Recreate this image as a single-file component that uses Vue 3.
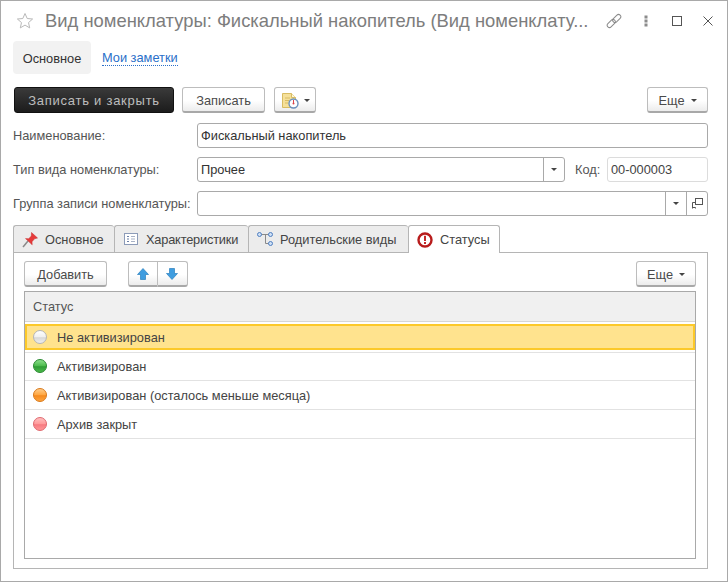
<template>
  <div class="window">
    <header class="title-bar">
      <svg class="star" width="18" height="18" viewBox="0 0 18 18">
        <path d="M9 1.500l2.200 5 5.400.5-4.100 3.600 1.200 5.300L9 13.100l-4.700 2.800 1.200-5.300L1.400 7l5.400-.5z" fill="#fff" stroke="#b9b9b9" />
      </svg>
      <div class="title">Вид номенклатуры: Фискальный накопитель (Вид номенклату...</div>
      <div class="window-tools">
        <svg width="16" height="16" viewBox="0 0 16 16" fill="none" stroke="#8a8a8a">
          <rect x="0.500" y="8.250" width="9.500" height="4.500" rx="2.250" transform="rotate(-45 5.250 10.500)" />
          <rect x="6" y="3.250" width="9.500" height="4.500" rx="2.250" transform="rotate(-45 10.750 5.500)" />
        </svg>
        <svg class="kebab" width="4" height="12" viewBox="0 0 4 12" fill="#8c8c8c">
          <rect x="0.500" y="0.500" width="3" height="3" />
          <rect x="0.500" y="4.500" width="3" height="3" />
          <rect x="0.500" y="8.500" width="3" height="3" />
        </svg>
        <span class="maximize"></span>
        <svg class="close" width="10" height="10" viewBox="0 0 10 10" stroke="#555" fill="none">
          <path d="M.5.500l9 9M9.500.500l-9 9" />
        </svg>
      </div>
    </header>

    <nav class="page-nav">
      <span class="page-tab">Основное</span>
      <a class="page-link">Мои заметки</a>
    </nav>

    <div class="command-bar">
      <button class="btn btn-default">Записать и закрыть</button>
      <button class="btn btn-save">Записать</button>
      <button class="btn btn-report">
        <svg width="17" height="17" viewBox="0 0 17 17">
          <path d="M.5 1.500h9l4 4v10H.5z" fill="#f5e09a" stroke="#d8bc62" />
          <path d="M9.500 1.500v4h4" fill="#fff6d6" stroke="#d8bc62" />
          <path d="M3 6h5M3 8.500h4M3 11h3" stroke="#d8bc62" />
          <circle cx="11.500" cy="11.500" r="4.500" fill="#fff" stroke="#6a8fbc" stroke-width="1.400" />
          <path d="M11.500 8v3.500" stroke="#d9424a" />
          <circle cx="11.500" cy="11.500" r="1" fill="#d9424a" />
        </svg>
        <i class="caret"></i>
      </button>
      <button class="btn btn-more">Еще<i class="caret"></i></button>
    </div>

    <div class="form">
      <div class="form-row">
        <label class="field-label">Наименование:</label>
        <div class="input">Фискальный накопитель</div>
      </div>
      <div class="form-row">
        <label class="field-label">Тип вида номенклатуры:</label>
        <div class="input input-type">
          <span class="input-text">Прочее</span>
          <span class="input-btn"><i class="caret"></i></span>
        </div>
        <label class="code-label">Код:</label>
        <div class="input input-code">00-000003</div>
      </div>
      <div class="form-row">
        <label class="field-label">Группа записи номенклатуры:</label>
        <div class="input input-group">
          <span class="input-text"></span>
          <span class="input-btn"><i class="caret"></i></span>
          <span class="input-btn">
            <svg width="11" height="11" viewBox="0 0 11 11" fill="none" stroke="#555">
              <rect x="3.500" y="0.500" width="7" height="6" />
              <path d="M3.500 4.500h-3v6M.5 9.500h3v1" />
            </svg>
          </span>
        </div>
      </div>
    </div>

    <div class="tabs">
      <div class="tab">
        <svg width="16" height="18" viewBox="0 0 16 18">
          <path d="M1 17l5-6" stroke="#8a8a8a" stroke-width="1.500" />
          <path d="M9.500 2.500l6 5.500-3 .8-2.500 3 .2 3-6.700-6.200 3.200.2 2.600-2.800z" fill="#e63a3a" stroke="#c42a2a" stroke-width="0.500" />
        </svg>
        Основное
      </div>
      <div class="tab tab-form">
        <svg width="14" height="14" viewBox="0 0 14 14" fill="none">
          <rect x="0.500" y="1.500" width="13" height="11" fill="#fff" stroke="#8c9bb8" />
          <path d="M3 4.500h2M3 7h2M3 9.500h2" stroke="#6b7fa6" />
          <path d="M7 4.500h4M7 7h4M7 9.500h4" stroke="#a8b2c6" />
        </svg>
        Характеристики
      </div>
      <div class="tab">
        <svg width="16" height="14" viewBox="0 0 16 14" fill="none">
          <path d="M4 2.500h8M8.500 2.500v9h3.500" stroke="#8a8a8a" />
          <circle cx="2.500" cy="2.500" r="2" fill="#cfe0f5" stroke="#4f7fc0" />
          <circle cx="13.500" cy="2.500" r="2" fill="#cfe0f5" stroke="#4f7fc0" />
          <circle cx="13.500" cy="11.500" r="2" fill="#cfe0f5" stroke="#4f7fc0" />
        </svg>
        Родительские виды
      </div>
      <div class="tab tab-active">
        <svg width="16" height="16" viewBox="0 0 16 16">
          <circle cx="8" cy="8" r="6.500" fill="#fff" stroke="#b81c1c" stroke-width="2.400" />
          <rect x="7" y="3.800" width="2" height="5.200" fill="#c42a2a" />
          <rect x="7" y="10" width="2" height="2" fill="#c42a2a" />
        </svg>
        Статусы
      </div>
      <div class="tabs-rest"></div>
    </div>

    <section class="panel">
      <div class="panel-bar">
        <button class="btn btn-add">Добавить</button>
        <div class="btn-pair">
          <button class="btn btn-arrow">
            <svg width="14" height="14" viewBox="0 0 14 14">
              <path d="M7 1.500l5.500 6H9.500v5h-5v-5H1.500z" fill="#3f9de0" stroke="#2a7fbd" stroke-width="0.700" />
            </svg>
          </button>
          <button class="btn btn-arrow">
            <svg width="14" height="14" viewBox="0 0 14 14">
              <path d="M7 12.500l5.500-6H9.500v-5h-5v5H1.500z" fill="#3f9de0" stroke="#2a7fbd" stroke-width="0.700" />
            </svg>
          </button>
        </div>
        <button class="btn btn-more">Еще<i class="caret"></i></button>
      </div>

      <div class="grid">
        <div class="grid-head">Статус</div>
        <div
          v-for="(row, i) in rows"
          :key="row.text"
          :class="['grid-row', { selected: i === 0 }]"
        >
          <svg width="16" height="16" viewBox="0 0 16 16">
            <defs>
              <linearGradient :id="'ball' + i" x1="0" y1="0" x2="0" y2="1">
                <stop offset="0" :stop-color="row.light" />
                <stop offset="0.500" :stop-color="row.mid" />
                <stop offset="0.550" :stop-color="row.deep" />
                <stop offset="1" :stop-color="row.mid" />
              </linearGradient>
            </defs>
            <circle cx="8" cy="8" r="6.500" :fill="'url(#ball' + i + ')'" :stroke="row.edge" />
          </svg>
          <span>{{ row.text }}</span>
        </div>
      </div>
    </section>
  </div>
</template>

<script setup>
const rows = [
  { text: 'Не активизирован', light: '#ffffff', mid: '#f0f0f0', deep: '#d8d8d8', edge: '#b5b5b5' },
  { text: 'Активизирован', light: '#8fe08f', mid: '#4cbb4c', deep: '#2f9c35', edge: '#2c8a33' },
  { text: 'Активизирован (осталось меньше месяца)', light: '#ffcf8f', mid: '#ffa640', deep: '#f58a1e', edge: '#d97a1c' },
  { text: 'Архив закрыт', light: '#ffc2c2', mid: '#ff9a9a', deep: '#f77a80', edge: '#e06a70' }
]
</script>

<style>
html, body {
  margin: 0;
  background: #fff;
}
</style>

<style scoped>
.window {
  width: 728px;
  height: 582px;
  box-sizing: border-box;
  border: 1px solid #a9a9a9;
  padding: 0 19px 12px 12px;
  display: flex;
  flex-direction: column;
  background: #fff;
  color: #4a4a4a;
  font-family: "Liberation Sans", Arial, sans-serif;
  font-size: 12.8px;
  overflow: hidden;
}

.title-bar {
  height: 40px;
  flex: none;
  display: flex;
  align-items: center;
  padding-left: 3px;
}

.star {
  flex: none;
}

.title {
  margin-left: 11px;
  width: 545px;
  flex: none;
  font-size: 18.4px;
  color: #7d7d7d;
  white-space: nowrap;
}

.window-tools {
  margin-left: 16px;
  display: flex;
  align-items: center;
  flex: none;
}

.kebab {
  margin-left: 22px;
}

.maximize {
  width: 8px;
  height: 8px;
  border: 1px solid #555;
  margin-left: 24px;
}

.close {
  margin-left: 21px;
}

.page-nav {
  height: 33px;
  flex: none;
  display: flex;
  align-items: center;
}

.page-tab {
  height: 33px;
  width: 78px;
  box-sizing: border-box;
  padding-top: 1px;
  background: #f2f2f2;
  border-radius: 4px;
  display: flex;
  align-items: center;
  justify-content: center;
  color: #333;
}

.page-link {
  margin-left: 11px;
  margin-top: 2px;
  color: #2a6fc9;
  border-bottom: 1px dotted #2a6fc9;
  line-height: 14px;
}

.command-bar {
  height: 26px;
  flex: none;
  margin-top: 13px;
  display: flex;
  align-items: stretch;
  padding-left: 1px;
}

.btn {
  height: 26px;
  box-sizing: border-box;
  padding: 1px 0 0;
  border: 1px solid #bdbdbd;
  border-bottom: 2px solid #a8a8a8;
  border-radius: 3px;
  background: linear-gradient(#ffffff, #ffffff 55%, #ececec);
  font: 12.8px "Liberation Sans", Arial, sans-serif;
  color: #4a4a4a;
  display: flex;
  align-items: center;
  justify-content: center;
}

.btn-default {
  width: 160px;
  border: 1px solid #111;
  background: linear-gradient(#3a3a3a, #1c1c1c);
  color: #bdbdbd;
  font-size: 13px;
  letter-spacing: 0.75px;
}

.btn-save {
  width: 83px;
  margin-left: 8px;
}

.btn-report {
  width: 42px;
  margin-left: 9px;
  justify-content: flex-start;
  padding-left: 7px;
  gap: 5px;
}

.btn-more {
  width: 61px;
  margin-left: auto;
  gap: 6px;
}

.caret {
  width: 0;
  height: 0;
  border-left: 3px solid transparent;
  border-right: 3px solid transparent;
  border-top: 3px solid #444;
  display: block;
}

.form {
  flex: none;
  margin-top: 10px;
  display: flex;
  flex-direction: column;
  gap: 9px;
}

.form-row {
  height: 25px;
  display: flex;
  align-items: center;
}

.field-label {
  width: 184px;
  flex: none;
  color: #555;
  white-space: nowrap;
}

.input {
  height: 25px;
  box-sizing: border-box;
  flex: 1;
  border: 1px solid #a9a9a9;
  border-radius: 3px;
  display: flex;
  align-items: center;
  padding-left: 3px;
  color: #333;
}

.input-type {
  flex: none;
  width: 368px;
}

.input-group {
  flex: 1;
}

.input-text {
  flex: 1;
}

.input-btn {
  width: 20px;
  height: 100%;
  border-left: 1px solid #a9a9a9;
  display: flex;
  align-items: center;
  justify-content: center;
}

.code-label {
  margin-left: 10px;
  width: 32px;
  flex: none;
  color: #555;
}

.input-code {
  flex: 1;
  border-color: #dcdcdc;
  color: #444;
}

.tabs {
  flex: none;
  margin-top: 9px;
  height: 28px;
  display: flex;
}

.tab {
  height: 28px;
  box-sizing: border-box;
  border: 1px solid #b5b5b5;
  border-right: none;
  border-radius: 3px 3px 0 0;
  background: #ececec;
  display: flex;
  align-items: center;
  gap: 7px;
  padding-left: 8px;
  color: #444;
}

.tab:nth-child(1) {
  width: 101px;
}

.tab:nth-child(2) {
  width: 134px;
}

.tab:nth-child(3) {
  width: 160px;
}

.tab-form {
  padding-left: 9px;
  gap: 8px;
  letter-spacing: -0.2px;
}

.tab-active {
  width: 92px;
  background: #fff;
  border-right: 1px solid #b5b5b5;
  border-bottom: none;
}

.tabs-rest {
  flex: 1;
  border-bottom: 1px solid #b5b5b5;
}

.panel {
  flex: 1;
  min-height: 0;
  box-sizing: border-box;
  border: 1px solid #b5b5b5;
  border-top: none;
  padding: 8px 11px 9px 10px;
  display: flex;
  flex-direction: column;
}

.panel-bar {
  height: 26px;
  flex: none;
  display: flex;
}

.btn-add {
  width: 83px;
}

.btn-pair {
  margin-left: 21px;
  display: flex;
}

.btn-arrow {
  width: 30px;
}

.btn-arrow:first-child {
  border-radius: 3px 0 0 3px;
}

.btn-arrow:last-child {
  border-left: none;
  border-radius: 0 3px 3px 0;
  padding-right: 2px;
}

.panel-bar .btn-more {
  width: 60px;
}

.grid {
  flex: 1;
  min-height: 0;
  margin-top: 4px;
  border: 1px solid #a9a9a9;
}

.grid-head {
  height: 29px;
  background: #f0f0f0;
  border-bottom: 1px solid #d6d6d6;
  display: flex;
  align-items: center;
  padding-left: 8px;
  color: #555;
}

.grid-row {
  height: 29px;
  box-sizing: border-box;
  border-bottom: 1px solid #e2e2e2;
  display: flex;
  align-items: center;
  gap: 9px;
  padding-left: 7px;
  color: #444;
}

.grid-row.selected {
  background: #ffe38e;
  border: 2px solid #fcc92a;
  margin-top: 2px;
  height: 26px;
  padding-left: 5px;
  box-shadow: 0 2px 0 #fff, 0 3px 0 #e2e2e2;
  margin-bottom: 2px;
}
</style>
